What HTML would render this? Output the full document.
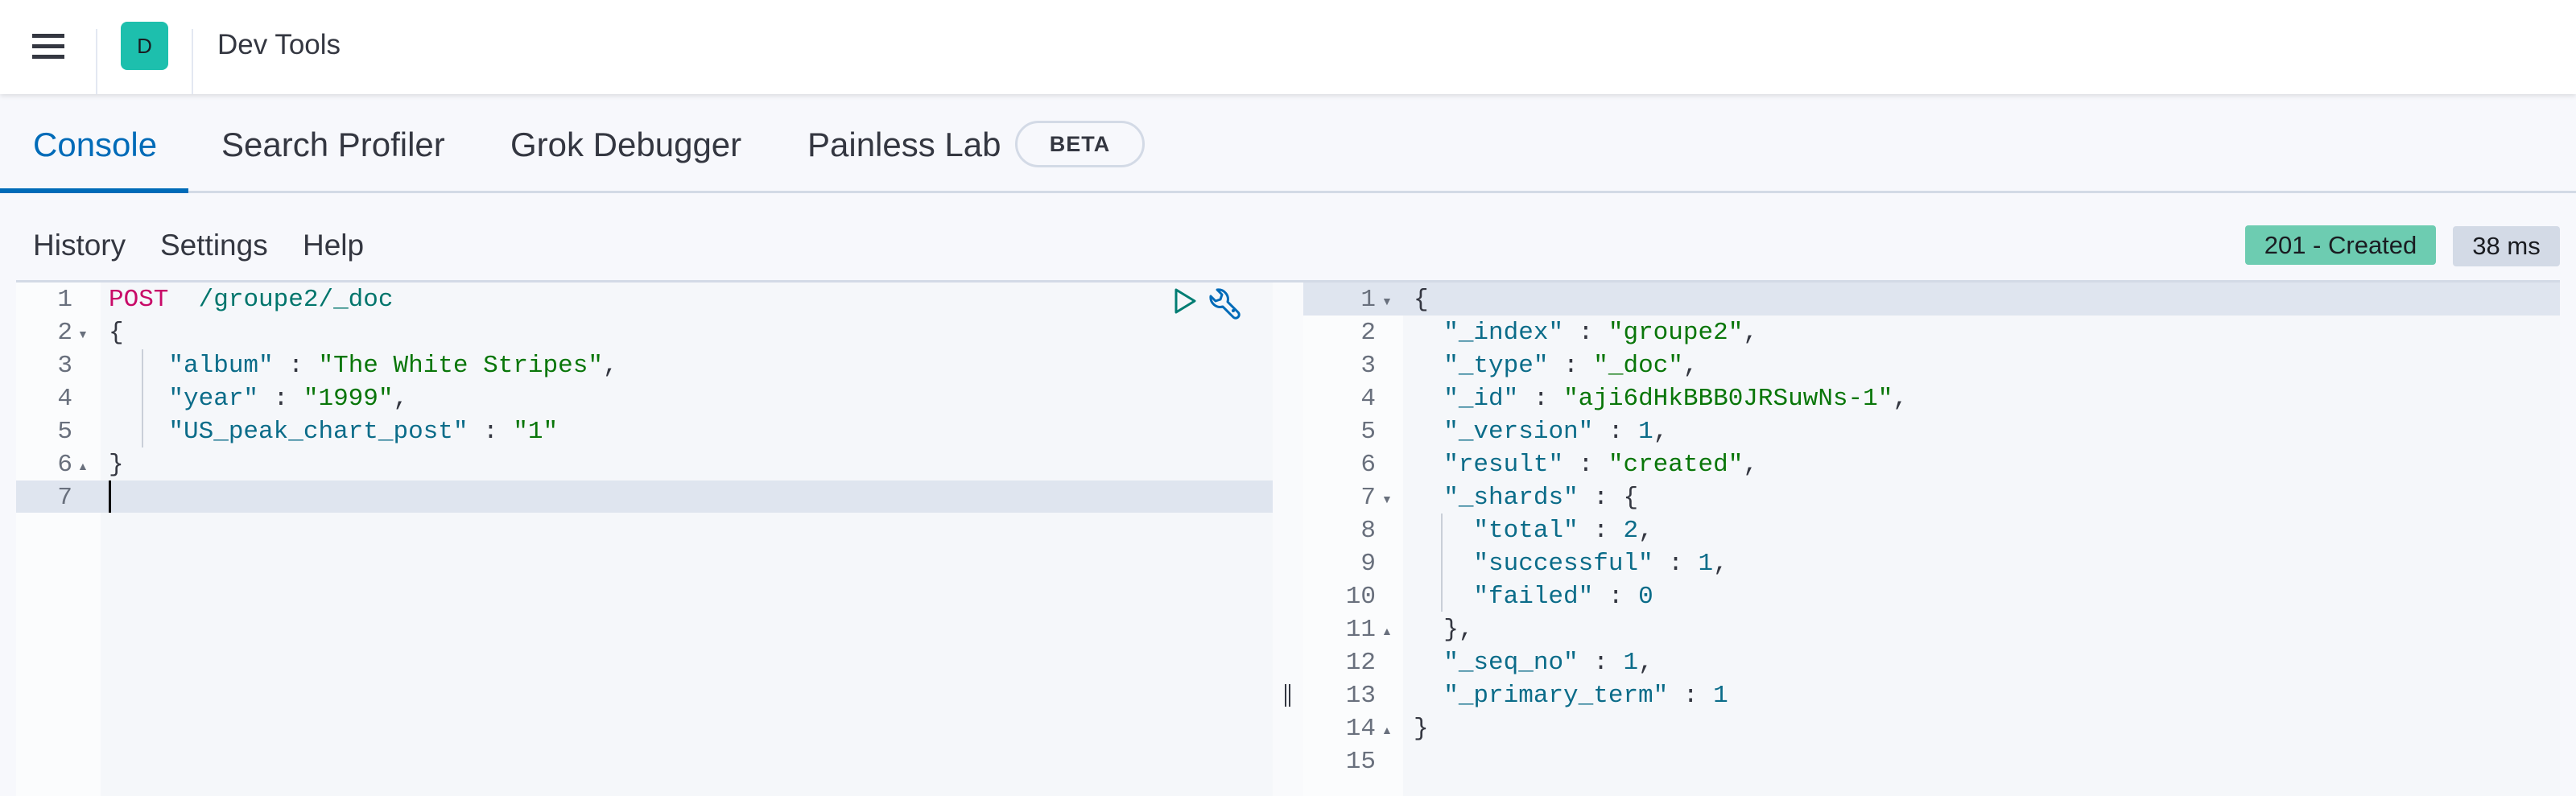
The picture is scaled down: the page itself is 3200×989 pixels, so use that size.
<!DOCTYPE html>
<html><head><meta charset="utf-8"><style>
*{margin:0;padding:0;box-sizing:border-box}
body{width:3200px;height:989px;overflow:hidden;background:#f7f8fc;font-family:"Liberation Sans",sans-serif;color:#343741;position:relative}
.abs{position:absolute}
.hdr{left:0;top:0;width:3200px;height:117px;background:#fff;box-shadow:0 2px 6px rgba(0,0,0,.12)}
.code{font-family:"Liberation Mono",monospace;font-size:31px;white-space:pre}
.ln{font-family:"Liberation Mono",monospace;font-size:31px;color:#69707d;text-align:right}
.k{color:#c80a68}.u{color:#00756c}.p{color:#0b6c89}.s{color:#097609}.n{color:#0b6c89}.b{color:#343741}
</style></head><body>
<div class="abs hdr"></div>
<div class="abs" style="left:40px;top:42px;width:40px;height:5px;background:#343741"></div>
<div class="abs" style="left:40px;top:55px;width:40px;height:5px;background:#343741"></div>
<div class="abs" style="left:40px;top:68px;width:40px;height:5px;background:#343741"></div>
<div class="abs" style="left:119px;top:36px;width:2px;height:81px;background:#e3e8f2"></div>
<div class="abs" style="left:238px;top:36px;width:2px;height:81px;background:#e3e8f2"></div>
<div class="abs" style="left:150px;top:27px;width:59px;height:60px;background:#1dbfad;border-radius:8px;font-size:26px;line-height:60px;text-align:center;color:#1a1c21">D</div>
<div class="abs" style="left:270px;top:36px;font-size:35px">Dev Tools</div>

<div class="abs" style="left:41px;top:156px;font-size:42px;color:#006bb8">Console</div>
<div class="abs" style="left:275px;top:156px;font-size:42px">Search Profiler</div>
<div class="abs" style="left:634px;top:156px;font-size:42px">Grok Debugger</div>
<div class="abs" style="left:1003px;top:156px;font-size:42px">Painless Lab</div>
<div class="abs" style="left:1261px;top:150px;width:161px;height:58px;border:3px solid #d3dae6;border-radius:29px;font-size:27px;font-weight:bold;text-align:center;line-height:52px;letter-spacing:1px">BETA</div>
<div class="abs" style="left:0;top:237px;width:3200px;height:3px;background:#d3dae6"></div>
<div class="abs" style="left:0;top:234px;width:234px;height:6px;background:#006bb8"></div>

<div class="abs" style="left:41px;top:284px;font-size:37px">History</div>
<div class="abs" style="left:199px;top:284px;font-size:37px">Settings</div>
<div class="abs" style="left:376px;top:284px;font-size:37px">Help</div>

<div class="abs" style="left:2789px;top:280px;width:237px;height:49px;background:#6dccb1;border-radius:4px;font-size:31px;line-height:49px;text-align:center;color:#1a1c21">201 - Created</div>
<div class="abs" style="left:3047px;top:281px;width:133px;height:50px;background:#d3dae6;border-radius:4px;font-size:31px;line-height:50px;text-align:center;color:#1a1c21">38 ms</div>

<!-- left editor -->
<div class="abs" style="left:20px;top:348px;width:1599px;height:641px;background:#f5f7fa;border-top:3px solid #d3dae6"></div>
<div class="abs" style="left:20px;top:351px;width:105px;height:638px;background:#fbfcfd"></div>
<div class="abs" style="left:1581px;top:351px;width:38px;height:638px;background:#f9fafc"></div>
<div class="abs" style="left:20px;top:597px;width:1561px;height:40px;background:#dfe5ef"></div>
<div class="abs" style="left:135px;top:597px;width:3px;height:40px;background:#000"></div>
<div class="abs" style="left:176px;top:434px;width:2px;height:122px;background:#c9cfd8"></div>
<div class="abs ln" style="left:20px;top:352px;width:70px;line-height:41px">1<br>2<br>3<br>4<br>5<br>6<br>7</div>
<div class="abs" style="left:96px;top:407px;font-size:14px;color:#69707d">▼</div>
<div class="abs" style="left:96px;top:571px;font-size:14px;color:#69707d">▲</div>
<div class="abs code" style="left:135px;top:352px;line-height:41px"><span class="k">POST</span>  <span class="u">/groupe2/_doc</span>
<span class="b">{</span>
    <span class="p">"album"</span> <span class="b">:</span> <span class="s">"The White Stripes"</span><span class="b">,</span>
    <span class="p">"year"</span> <span class="b">:</span> <span class="s">"1999"</span><span class="b">,</span>
    <span class="p">"US_peak_chart_post"</span> <span class="b">:</span> <span class="s">"1"</span>
<span class="b">}</span></div>
<svg class="abs" style="left:1458px;top:356px" width="90" height="42" viewBox="0 0 90 42">
<path d="M3 4 L26 18 L3 32 Z" fill="none" stroke="#017d73" stroke-width="3" stroke-linejoin="round"/>
<path d="M54 4 L60 10 L58 16 L52 18 L46 12 A12 12 0 0 0 61 25 L74 38 A4 4 0 0 0 80 32 L67 19 A12 12 0 0 0 54 4 Z" fill="none" stroke="#006bb8" stroke-width="3" stroke-linejoin="round"/>
<circle cx="74" cy="30" r="2" fill="#006bb8"/>
</svg>

<!-- splitter -->
<div class="abs" style="left:1596px;top:850px;width:2px;height:28px;background:#343741"></div>
<div class="abs" style="left:1601px;top:850px;width:2px;height:28px;background:#343741"></div>

<!-- right editor -->
<div class="abs" style="left:1619px;top:348px;width:1561px;height:641px;background:#f5f7fa;border-top:3px solid #d3dae6"></div>
<div class="abs" style="left:1619px;top:351px;width:124px;height:638px;background:#fbfcfd"></div>
<div class="abs" style="left:1619px;top:351px;width:1561px;height:41px;background:#dfe5ef"></div>
<div class="abs" style="left:1790px;top:638px;width:2px;height:122px;background:#c9cfd8"></div>
<div class="abs ln" style="left:1619px;top:352px;width:90px;line-height:41px">1<br>2<br>3<br>4<br>5<br>6<br>7<br>8<br>9<br>10<br>11<br>12<br>13<br>14<br>15</div>
<div class="abs" style="left:1716px;top:366px;font-size:14px;color:#69707d">▼</div>
<div class="abs" style="left:1716px;top:612px;font-size:14px;color:#69707d">▼</div>
<div class="abs" style="left:1716px;top:776px;font-size:14px;color:#69707d">▲</div>
<div class="abs" style="left:1716px;top:899px;font-size:14px;color:#69707d">▲</div>
<div class="abs code" style="left:1756px;top:352px;line-height:41px"><span class="b">{</span>
  <span class="p">"_index"</span> <span class="b">:</span> <span class="s">"groupe2"</span><span class="b">,</span>
  <span class="p">"_type"</span> <span class="b">:</span> <span class="s">"_doc"</span><span class="b">,</span>
  <span class="p">"_id"</span> <span class="b">:</span> <span class="s">"aji6dHkBBB0JRSuwNs-1"</span><span class="b">,</span>
  <span class="p">"_version"</span> <span class="b">:</span> <span class="n">1</span><span class="b">,</span>
  <span class="p">"result"</span> <span class="b">:</span> <span class="s">"created"</span><span class="b">,</span>
  <span class="p">"_shards"</span> <span class="b">: {</span>
    <span class="p">"total"</span> <span class="b">:</span> <span class="n">2</span><span class="b">,</span>
    <span class="p">"successful"</span> <span class="b">:</span> <span class="n">1</span><span class="b">,</span>
    <span class="p">"failed"</span> <span class="b">:</span> <span class="n">0</span>
  <span class="b">},</span>
  <span class="p">"_seq_no"</span> <span class="b">:</span> <span class="n">1</span><span class="b">,</span>
  <span class="p">"_primary_term"</span> <span class="b">:</span> <span class="n">1</span>
<span class="b">}</span></div>
</body></html>
